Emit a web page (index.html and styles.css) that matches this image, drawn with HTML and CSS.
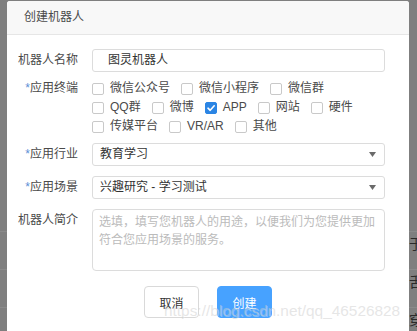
FILE: index.html
```html
<!DOCTYPE html>
<html lang="zh">
<head>
<meta charset="utf-8">
<title>创建机器人</title>
<link rel="stylesheet" href="styles.css">
</head>
<body>
<div class="page">
  <div class="bg-row bg-first"><span class="bg-char">于</span></div>
  <div class="bg-row"><span class="bg-char">舌</span></div>
  <div class="bg-row"><span class="bg-char">穿</span></div>
</div>

<div class="dialog">
  <div class="dialog-header">创建机器人</div>
  <div class="form">
    <div class="row row-name">
      <div class="label">机器人名称</div>
      <div class="input input-name">图灵机器人</div>
    </div>
    <div class="row row-check">
      <div class="label label-check"><span class="star">*</span>应用终端</div>
      <div class="checks">
        <div class="check-line">
          <span class="check"><span class="box"></span>微信公众号</span>
          <span class="check"><span class="box"></span>微信小程序</span>
          <span class="check"><span class="box"></span>微信群</span>
        </div>
        <div class="check-line">
          <span class="check"><span class="box"></span>QQ群</span>
          <span class="check"><span class="box"></span>微博</span>
          <span class="check"><span class="box box-on"><svg width="10" height="10" viewBox="0 0 10 10"><path d="M2 5.2 L4.2 7.3 L8.2 2.8" fill="none" stroke="#fff" stroke-width="1.6" stroke-linecap="round" stroke-linejoin="round"/></svg></span>APP</span>
          <span class="check"><span class="box"></span>网站</span>
          <span class="check"><span class="box"></span>硬件</span>
        </div>
        <div class="check-line">
          <span class="check"><span class="box"></span>传媒平台</span>
          <span class="check"><span class="box"></span>VR/AR</span>
          <span class="check"><span class="box"></span>其他</span>
        </div>
      </div>
    </div>
    <div class="row row-sel1">
      <div class="label"><span class="star">*</span>应用行业</div>
      <div class="input select"><span>教育学习</span><svg class="caret" width="7" height="5" viewBox="0 0 7 5"><path d="M0 0 H7 L3.5 5 Z" fill="#6a6a6a"/></svg></div>
    </div>
    <div class="row row-sel2">
      <div class="label"><span class="star">*</span>应用场景</div>
      <div class="input select"><span>兴趣研究 - 学习测试</span><svg class="caret" width="7" height="5" viewBox="0 0 7 5"><path d="M0 0 H7 L3.5 5 Z" fill="#6a6a6a"/></svg></div>
    </div>
    <div class="row row-text">
      <div class="label label-text">机器人简介</div>
      <div class="textarea">选填，填写您机器人的用途，以便我们为您提供更加符合您应用场景的服务。</div>
    </div>
    <div class="actions">
      <button class="btn btn-cancel">取消</button>
      <button class="btn btn-primary">创建</button>
    </div>
  </div>
</div>

<div class="watermark">https://blog.csdn.net/qq_46526828</div>
</body>
</html>
```

FILE: styles.css
```css
html, body {
  margin: 0;
  padding: 0;
}
body {
  width: 417px;
  height: 331px;
  overflow: hidden;
  background: #7f7f7f;
  font-family: "Liberation Sans", "Noto Sans CJK SC", sans-serif;
  font-size: 12px;
  color: #444;
  position: relative;
}

.page {
  display: flex;
  flex-direction: column;
  padding-top: 231px;
}
.bg-row {
  height: 37px;
  border-top: 1px solid #8a8a8a;
  display: flex;
}
.bg-char {
  margin-left: 409px;
  margin-top: 4px;
  font-size: 14px;
  line-height: 16px;
  color: #2a2a2a;
}

.dialog {
  position: absolute;
  left: 7px;
  top: 1px;
  width: 402px;
  height: 345px;
  background: #fff;
  border-radius: 3px;
}
.dialog-header {
  height: 33px;
  line-height: 33px;
  padding-left: 17px;
  background: #f8f8f8;
  border-bottom: 1px solid #e6e6e6;
  border-radius: 3px 3px 0 0;
  color: #4a4a4a;
  font-size: 12px;
}

.form {
  display: flex;
  flex-direction: column;
}
.row {
  display: grid;
  grid-template-columns: 71px 293px;
  column-gap: 14px;
}
.row-name { margin-top: 14px; }
.row-check { margin-top: 7px; }
.row-sel1 { margin-top: 7px; }
.row-sel2 { margin-top: 10px; }
.row-text { margin-top: 10px; }

.label {
  text-align: right;
  line-height: 23px;
  color: #4a4a4a;
  white-space: nowrap;
}
.label-check { line-height: 19px; }
.label-text { line-height: 19px; padding-top: 2px; }
.star {
  color: #5b8fd6;
}

.input {
  box-sizing: border-box;
  height: 23px;
  border: 1px solid #dcdcdc;
  border-radius: 3px;
  padding: 0 7px;
  line-height: 21px;
  color: #333;
}
.input-name { padding-left: 15px; }
.select {
  display: flex;
  align-items: center;
  justify-content: space-between;
  padding-right: 8px;
}
.caret { display: block; }

.checks {
  display: flex;
  flex-direction: column;
}
.check-line {
  display: flex;
  height: 19px;
  align-items: center;
}
.check {
  display: flex;
  align-items: center;
  margin-right: 11px;
  color: #4a4a4a;
  line-height: 19px;
}
.box {
  box-sizing: border-box;
  width: 12px;
  height: 12px;
  border: 1px solid #c9c9c9;
  border-radius: 2px;
  background: #fff;
  margin-right: 6px;
  display: flex;
  align-items: center;
  justify-content: center;
}
.box-on {
  background: #2b85e4;
  border-color: #2b85e4;
}

.textarea {
  box-sizing: border-box;
  height: 62px;
  border: 1px solid #dcdcdc;
  border-radius: 4px;
  padding: 3px 7px 0 6px;
  line-height: 18px;
  color: #bbb;
}

.actions {
  display: flex;
  justify-content: center;
  gap: 18px;
  margin-top: 15px;
}
.btn {
  box-sizing: border-box;
  width: 55px;
  height: 32px;
  border-radius: 4px;
  font-family: "Liberation Sans", "Noto Sans CJK SC", sans-serif;
  font-size: 12px;
  padding: 0;
  cursor: pointer;
}
.btn-cancel {
  background: #fff;
  border: 1px solid #d9d9d9;
  color: #333;
}
.btn-primary {
  background: #47a2ff;
  border: 1px solid #47a2ff;
  color: #fff;
}

.watermark {
  position: absolute;
  left: 164px;
  top: 301px;
  font-family: "Liberation Sans", sans-serif;
  font-size: 15.4px;
  line-height: 20px;
  color: rgba(205, 205, 205, 0.5);
  text-shadow: 1px 1px 0 rgba(255, 255, 255, 0.3);
  white-space: nowrap;
  pointer-events: none;
}
```
